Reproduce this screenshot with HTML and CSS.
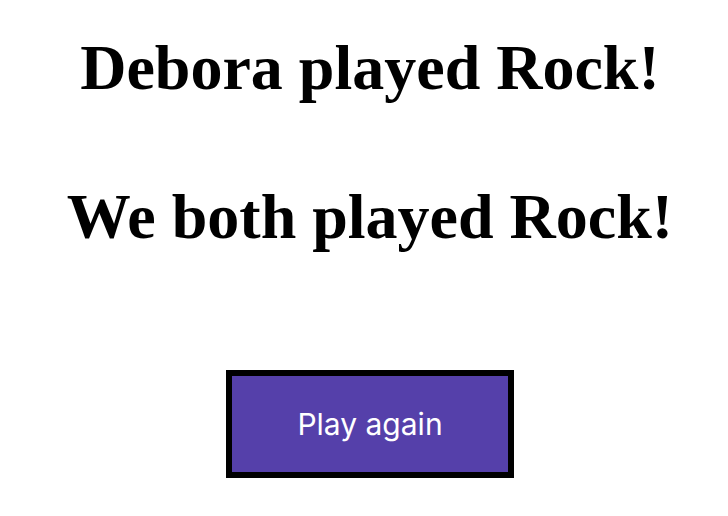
FILE: index.html
```html
<!DOCTYPE html>
<html>
<head>
<meta charset="utf-8">
<link rel="stylesheet" href="styles.css">
</head>
<body>
<main class="result">
  <h1 class="headline">Debora played Rock!</h1>
  <h1 class="headline">We both played Rock!</h1>
  <button class="play-again">Play again</button>
</main>
</body>
</html>
```
FILE: styles.css
```css
html, body {
  margin: 0;
  padding: 0;
  background: #ffffff;
}
.result {
  display: flex;
  flex-direction: column;
  align-items: center;
  padding-top: 31px;
  padding-left: 12px;
}
.headline {
  font-family: "Liberation Serif", "Times New Roman", serif;
  font-weight: bold;
  font-size: 64px;
  line-height: 74px;
  margin: 0 0 75px 0;
  color: #000;
  text-align: center;
  white-space: nowrap;
}
.headline + .headline {
  margin-bottom: 116px;
}
.play-again {
  box-sizing: border-box;
  width: 288px;
  height: 108px;
  border: 6px solid #000;
  background: #5540aa;
  color: #fff;
  font-family: Inter, "Noto Sans", sans-serif;
  font-size: 30px;
  padding: 0;
  cursor: pointer;
}
```
